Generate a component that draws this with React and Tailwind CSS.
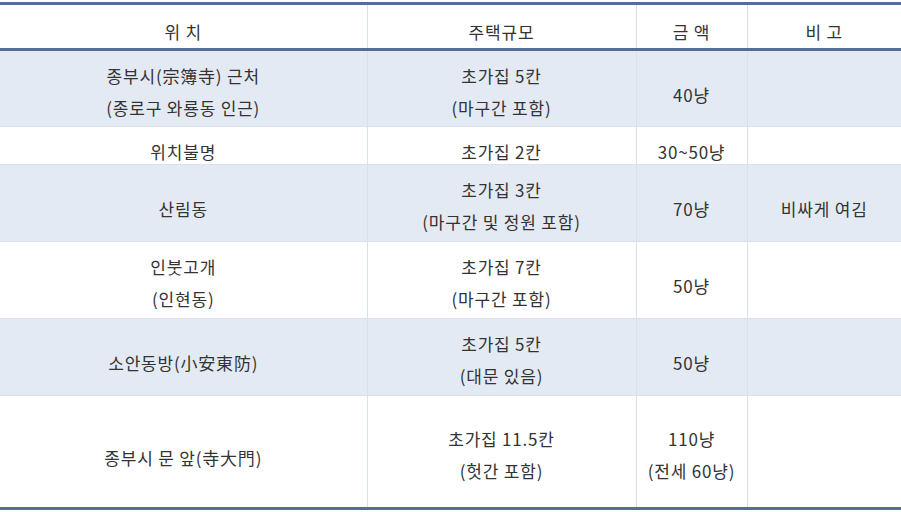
const rows = [
  { h: 77, bg: true, cells: [["종부시(宗簿寺) 근처", "(종로구 와룡동 인근)"], ["초가집 5칸", "(마구간 포함)"], ["40냥"], []] },
  { h: 38, bg: false, cells: [["위치불명"], ["초가집 2칸"], ["30~50냥"], []] },
  { h: 77, bg: true, cells: [["산림동"], ["초가집 3칸", "(마구간 및 정원 포함)"], ["70냥"], ["비싸게 여김"]] },
  { h: 77, bg: false, cells: [["인붓고개", "(인현동)"], ["초가집 7칸", "(마구간 포함)"], ["50냥"], []] },
  { h: 77, bg: true, cells: [["소안동방(小安東防)"], ["초가집 5칸", "(대문 있음)"], ["50냥"], []] },
  { h: 113, bg: false, cells: [["종부시 문 앞(寺大門)"], ["초가집 11.5칸", "(헛간 포함)"], ["110냥", "(전세 60냥)"], []] },
];

function Cell({ lines, last }) {
  const two = lines.length > 1;
  return (
    <td
      className={
        "align-middle text-center " +
        (two ? "pt-[6px] leading-[32px] " : "pt-[12px] leading-[22px] ") +
        (last ? "" : "border-r border-[#d9e1ec]")
      }
    >
      {lines.map((l, i) => (
        <div key={i}>{l}</div>
      ))}
    </td>
  );
}

export default function App() {
  return (
    <div
      className="w-[901px] h-[512px] bg-white pt-[2px] text-[#333] text-[17px] tracking-[0.8px]"
      style={{ fontFamily: '"Noto Sans CJK KR", "Noto Sans", sans-serif' }}
    >
      <table className="w-full table-fixed border-collapse border-t-[3px] border-b-[3px] border-[#536f98]">
        <colgroup>
          <col className="w-[367px]" />
          <col className="w-[269px]" />
          <col className="w-[111px]" />
          <col className="w-[154px]" />
        </colgroup>
        <thead>
          <tr className="h-[46px] border-b-[3px] border-[#536f98]">
            {["위 치", "주택규모", "금 액", "비 고"].map((t, i) => (
              <th
                key={t}
                className={
                  "font-normal align-middle text-center pt-[10px] leading-[22px] " +
                  (i < 3 ? "border-r border-[#d9e1ec]" : "")
                }
              >
                {t}
              </th>
            ))}
          </tr>
        </thead>
        <tbody>
          {rows.map((r, ri) => (
            <tr
              key={ri}
              style={{ height: r.h }}
              className={
                (r.bg ? "bg-[#e4eaf3] " : "bg-white ") +
                (ri < rows.length - 1 ? "border-b border-[#dbe2ed]" : "")
              }
            >
              {r.cells.map((c, ci) => (
                <Cell key={ci} lines={c} last={ci === 3} />
              ))}
            </tr>
          ))}
        </tbody>
      </table>
    </div>
  );
}
